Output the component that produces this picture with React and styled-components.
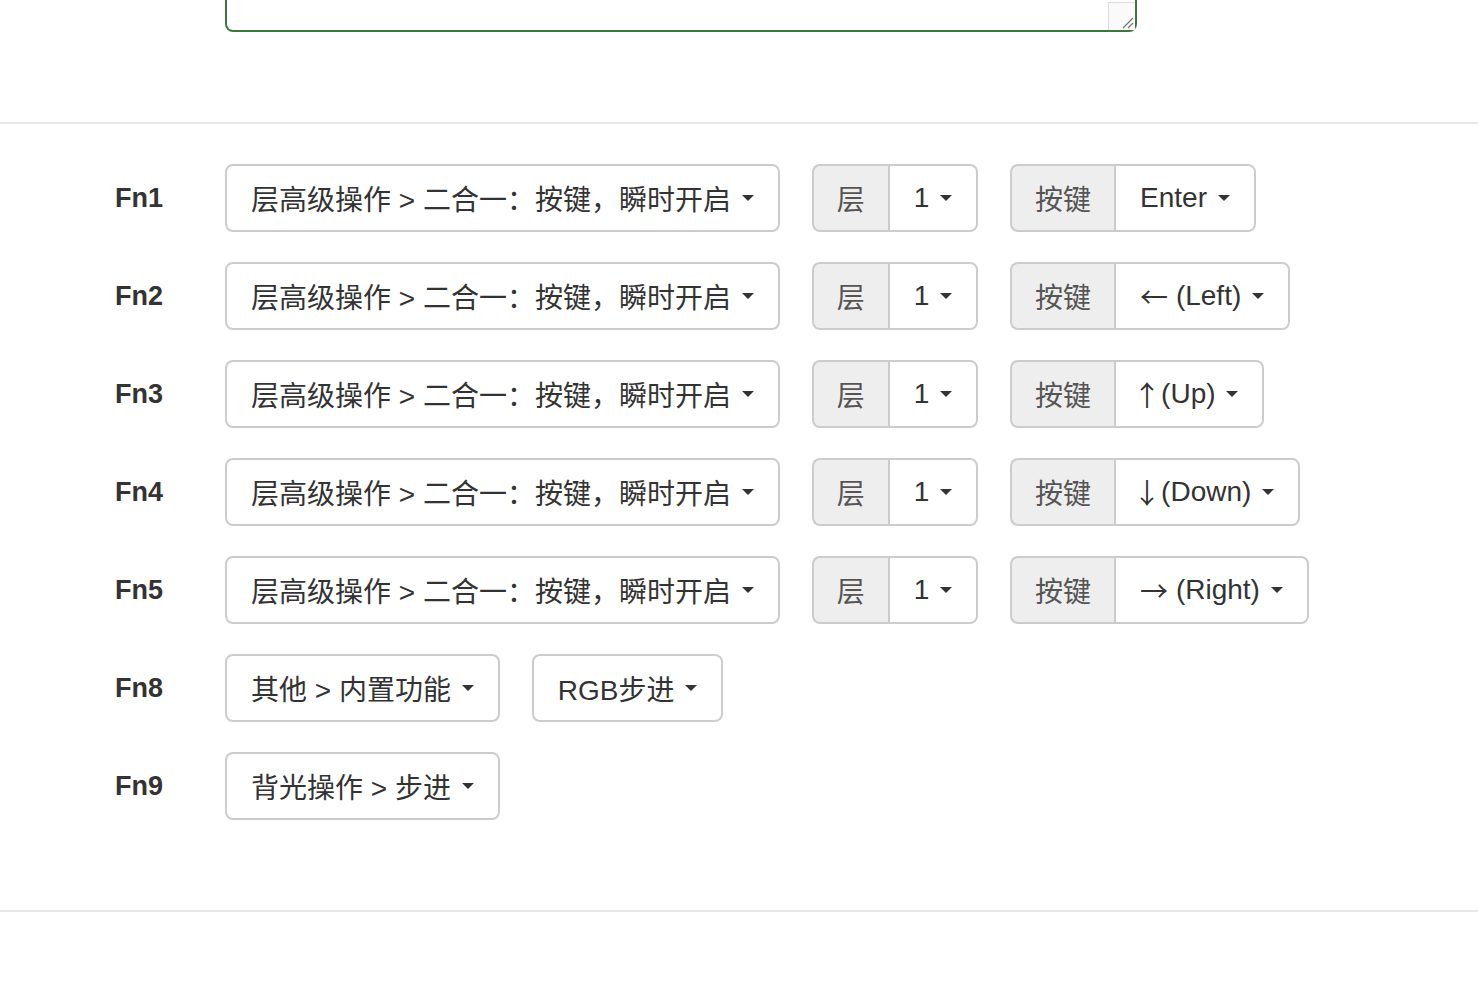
import React from "react";
import styled, { createGlobalStyle } from "styled-components";

const GlobalStyle = createGlobalStyle`
  html, body {
    margin: 0;
    padding: 0;
    background: #fff;
  }
  body {
    font-family: "Liberation Sans", "Noto Sans CJK SC", Arial, sans-serif;
    font-size: 28px;
    color: #333;
  }
`;

const Page = styled.div`
  width: 1478px;
`;

const TextareaRow = styled.div`
  padding-left: 225px;
`;

const TextareaBox = styled.div`
  width: 912px;
  height: 32px;
  box-sizing: border-box;
  border: 2px solid #3c763d;
  border-top: none;
  border-radius: 0 0 8px 8px;
  display: flex;
  justify-content: flex-end;
  background: #fff;
`;

const ScrollTrack = styled.div`
  width: 26px;
  margin-top: 2px;
  border-left: 1px solid #dcdcdc;
  border-top: 1px solid #dcdcdc;
  background: #fafafa;
  display: flex;
  align-items: flex-end;
  justify-content: flex-end;
`;

const Divider = styled.hr`
  margin: 0;
  border: none;
  border-top: 2px solid #e7e7e7;
  margin-top: ${(p) => p.top}px;
`;

const Form = styled.div`
  padding-top: 40px;
  padding-bottom: 90px;
  display: flex;
  flex-direction: column;
  gap: 30px;
`;

const Row = styled.div`
  display: flex;
  align-items: center;
  height: 68px;
`;

const Label = styled.label`
  width: 225px;
  box-sizing: border-box;
  padding-left: 115px;
  font-weight: bold;
  font-size: 27px;
  color: #333;
`;

const Controls = styled.div`
  display: flex;
  align-items: center;
  gap: 32px;
`;

const Button = styled.button`
  height: 68px;
  box-sizing: border-box;
  padding: 0 24px;
  border: 2px solid #ccc;
  border-radius: ${(p) => (p.joined ? "0 8px 8px 0" : "8px")};
  background: #fff;
  color: #333;
  font-family: "Liberation Sans", "Noto Sans CJK SC", Arial, sans-serif;
  font-size: 28px;
  display: flex;
  align-items: center;
  white-space: pre;
  cursor: pointer;
`;

const Arrow = styled.span`
  font-family: "Noto Sans CJK SC", sans-serif;
  font-size: 28px;
  margin-left: ${(p) => (p.narrow ? "-7px" : "0")};
`;

const Caret = styled.span`
  display: inline-block;
  width: 0;
  height: 0;
  margin-left: 3px;
  border-top: 6px solid #333;
  border-left: 6px solid transparent;
  border-right: 6px solid transparent;
`;

const Group = styled.div`
  display: flex;
  height: 68px;
`;

const Addon = styled.span`
  box-sizing: border-box;
  padding: 0 23px;
  background: #eee;
  border: 2px solid #ccc;
  border-right: none;
  border-radius: 8px 0 0 8px;
  display: flex;
  align-items: center;
  color: #555;
  font-size: 28px;
`;

const Dropdown = ({ text, arrow, narrow, joined }) => (
  <Button joined={joined}>
    {arrow && <Arrow narrow={narrow}>{arrow}</Arrow>}
    {text} <Caret />
  </Button>
);

const KeyGroup = ({ label, value, arrow, narrow }) => (
  <Group>
    <Addon>{label}</Addon>
    <Dropdown joined text={value} arrow={arrow} narrow={narrow} />
  </Group>
);

const layerRows = [
  { fn: "Fn1", key: "Enter" },
  { fn: "Fn2", arrow: "←", key: " (Left)" },
  { fn: "Fn3", arrow: "↑", key: "(Up)", narrow: true },
  { fn: "Fn4", arrow: "↓", key: "(Down)", narrow: true },
  { fn: "Fn5", arrow: "→", key: " (Right)" },
];

export default function App() {
  return (
    <Page>
      <GlobalStyle />
      <TextareaRow>
        <TextareaBox>
          <ScrollTrack>
            <svg width="16" height="16" viewBox="0 0 16 16">
              <line x1="4" y1="14" x2="14" y2="4" stroke="#777" strokeWidth="1.2" />
              <line x1="9" y1="14" x2="14" y2="9" stroke="#777" strokeWidth="1.2" />
            </svg>
          </ScrollTrack>
        </TextareaBox>
      </TextareaRow>
      <Divider top={90} />
      <Form>
        {layerRows.map((r) => (
          <Row key={r.fn}>
            <Label>{r.fn}</Label>
            <Controls>
              <Dropdown text="层高级操作 > 二合一：按键，瞬时开启" />
              <KeyGroup label="层" value="1" />
              <KeyGroup label="按键" value={r.key} arrow={r.arrow} narrow={r.narrow} />
            </Controls>
          </Row>
        ))}
        <Row>
          <Label>Fn8</Label>
          <Controls>
            <Dropdown text="其他 > 内置功能" />
            <Dropdown text="RGB步进" />
          </Controls>
        </Row>
        <Row>
          <Label>Fn9</Label>
          <Controls>
            <Dropdown text="背光操作 > 步进" />
          </Controls>
        </Row>
      </Form>
      <Divider top={0} />
    </Page>
  );
}
